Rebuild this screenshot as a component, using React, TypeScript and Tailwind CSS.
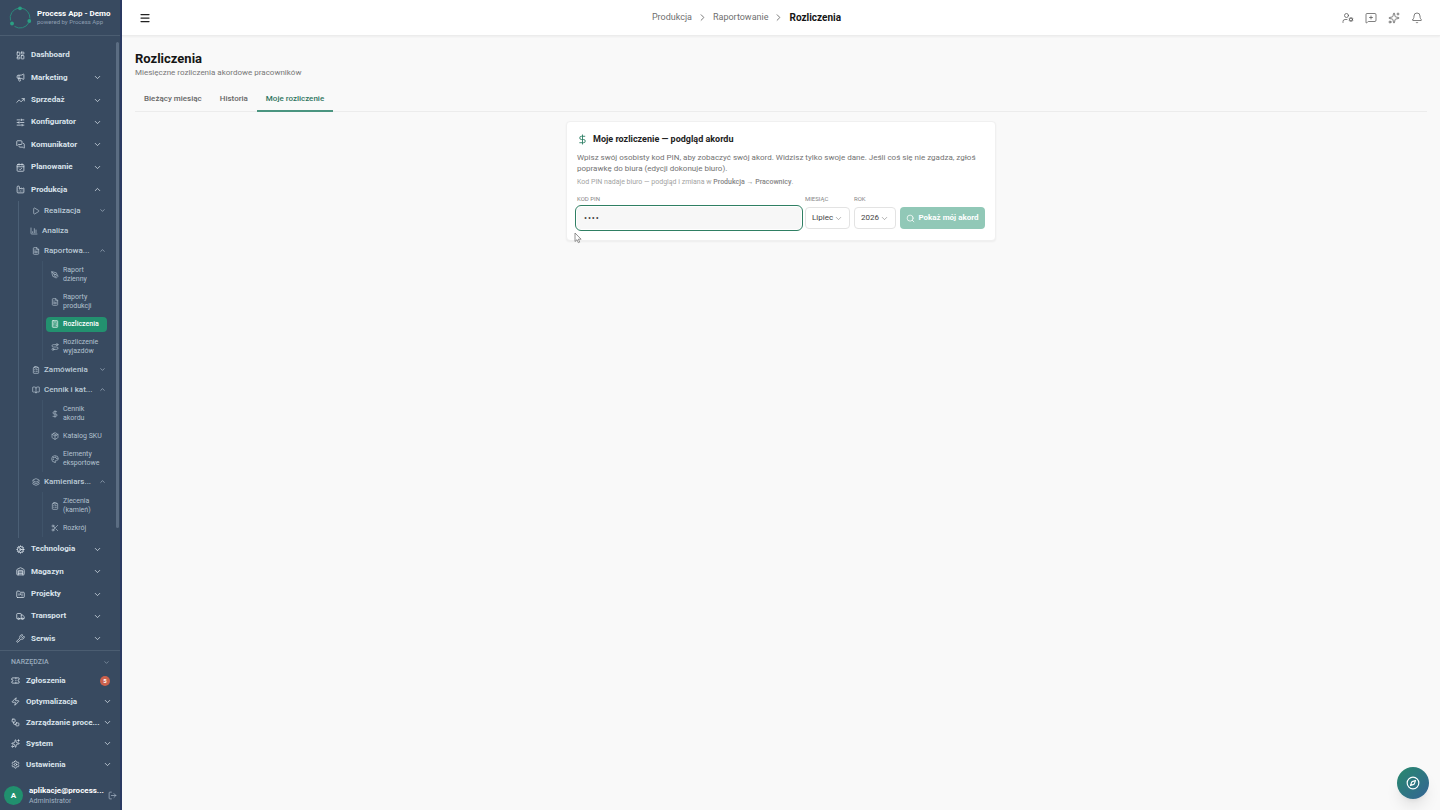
import React, { useState } from "react";
import {
  Bell,
  BookOpen,
  Calculator,
  CalendarCheck,
  ChartColumn,
  ChevronDown,
  ChevronRight,
  ChevronUp,
  ClipboardList,
  Cog,
  Compass,
  DollarSign,
  Factory,
  FileText,
  FolderKanban,
  Layers,
  LayoutDashboard,
  LogOut,
  Megaphone,
  Menu,
  MessageSquarePlus,
  MessagesSquare,
  Package,
  Palette,
  PenTool,
  Play,
  Route,
  Scissors,
  Search,
  Settings,
  SlidersHorizontal,
  Sparkles,
  Ticket,
  TrendingUp,
  Truck,
  UserCog,
  Warehouse,
  Workflow,
  Wrench,
  Zap,
  type LucideIcon,
} from "lucide-react";
import { clsx } from "clsx";

interface Leaf {
  label: string;
  icon: LucideIcon;
  active?: boolean;
}

interface Group {
  label: string;
  icon: LucideIcon;
  plain?: boolean;
  children?: Leaf[];
}

interface Section {
  label: string;
  icon: LucideIcon;
  plain?: boolean;
  badge?: number;
  children?: Group[];
}

const sections: Section[] = [
  { label: "Dashboard", icon: LayoutDashboard, plain: true },
  { label: "Marketing", icon: Megaphone },
  { label: "Sprzedaż", icon: TrendingUp },
  { label: "Konfigurator", icon: SlidersHorizontal },
  { label: "Komunikator", icon: MessagesSquare },
  { label: "Planowanie", icon: CalendarCheck },
  {
    label: "Produkcja",
    icon: Factory,
    children: [
      { label: "Realizacja", icon: Play },
      { label: "Analiza", icon: ChartColumn, plain: true },
      {
        label: "Raportowa...",
        icon: FileText,
        children: [
          { label: "Raport dzienny", icon: PenTool },
          { label: "Raporty produkcji", icon: FileText },
          { label: "Rozliczenia", icon: Calculator, active: true },
          { label: "Rozliczenie wyjazdów", icon: Route },
        ],
      },
      { label: "Zamówienia", icon: ClipboardList },
      {
        label: "Cennik i kat...",
        icon: BookOpen,
        children: [
          { label: "Cennik akordu", icon: DollarSign },
          { label: "Katalog SKU", icon: Package },
          { label: "Elementy eksportowe", icon: Palette },
        ],
      },
      {
        label: "Kamieniars...",
        icon: Layers,
        children: [
          { label: "Zlecenia (kamień)", icon: ClipboardList },
          { label: "Rozkrój", icon: Scissors },
        ],
      },
    ],
  },
  { label: "Technologia", icon: Cog },
  { label: "Magazyn", icon: Warehouse },
  { label: "Projekty", icon: FolderKanban },
  { label: "Transport", icon: Truck },
  { label: "Serwis", icon: Wrench },
];

const tools: Section[] = [
  { label: "Zgłoszenia", icon: Ticket, plain: true, badge: 5 },
  { label: "Optymalizacja", icon: Zap },
  { label: "Zarządzanie proce...", icon: Workflow },
  { label: "System", icon: Sparkles },
  { label: "Ustawienia", icon: Settings },
];

const tabs = ["Bieżący miesiąc", "Historia", "Moje rozliczenie"];

function Logo() {
  return (
    <svg className="h-6 w-6 shrink-0" viewBox="0 0 24 24" fill="none">
      <g stroke="#2b8a7c" strokeWidth="1">
        <path d="M13.5 2.1A10 10 0 0 1 21.9 12.5" />
        <path d="M20.8 16.7A10 10 0 0 1 6.5 20.4" />
        <path d="M2.5 14.5A10 10 0 0 1 10.2 2.2" />
      </g>
      <g fill="#2aa083">
        <circle cx="12" cy="2.3" r="1.9" />
        <circle cx="21.3" cy="15" r="1.9" />
        <circle cx="4" cy="17.5" r="1.9" />
      </g>
    </svg>
  );
}

function LeafLink({ item }: { item: Leaf }) {
  const Icon = item.icon;
  return (
    <a
      href="#"
      className={clsx(
        "flex items-center gap-1 rounded px-[5px] py-[3px] text-[7px] leading-[9px]",
        item.active ? "bg-[#23916f] font-medium text-white" : "text-[#b3c1cf]"
      )}
    >
      <Icon className="h-2 w-2 shrink-0" />
      <span className="w-[42px]">{item.label}</span>
    </a>
  );
}

function GroupItem({ group }: { group: Group }) {
  const Icon = group.icon;
  const Chevron = group.children ? ChevronUp : ChevronDown;
  return (
    <div>
      <button
        className={clsx(
          "flex h-5 w-full items-center gap-1 pr-[10px] text-left text-[8px] font-medium text-[#bccad7]",
          group.plain ? "pl-[11px]" : "pl-[13px]"
        )}
      >
        <Icon className="h-2 w-2 shrink-0" />
        <span className="flex-1 whitespace-nowrap">{group.label}</span>
        {!group.plain && <Chevron className="h-[7px] w-[7px] shrink-0" />}
      </button>
      {group.children && (
        <div className="mr-[9px] ml-[23px] flex flex-col gap-[3px] border-l border-[#3f5369] pt-[2px] pb-px pl-[3px]">
          {group.children.map((leaf) => (
            <LeafLink key={leaf.label} item={leaf} />
          ))}
        </div>
      )}
    </div>
  );
}

function Sidebar() {
  return (
    <aside className="flex w-[122px] shrink-0 flex-col border-r-2 border-[#2b3a63] bg-[#384a60]">
      <div className="flex h-9 shrink-0 items-center gap-[5px] border-b border-[#4b5d71] pl-2">
        <Logo />
        <div className="whitespace-nowrap">
          <div className="text-[8px] leading-[9px] font-bold text-white">Process App - Demo</div>
          <div className="text-[6px] leading-[8px] text-[#8d9eb0]">powered by Process App</div>
        </div>
      </div>

      <div className="flex min-h-0 flex-1">
        <nav className="flex min-w-0 flex-1 flex-col pt-2">
          {sections.map((section) => {
            const Icon = section.icon;
            const Chevron = section.children ? ChevronUp : ChevronDown;
            return (
              <React.Fragment key={section.label}>
                <button className="flex min-h-[22px] grow items-center gap-[6px] pr-[14px] pl-4 text-left text-[8px] font-bold text-[#dbe4ec]">
                  <Icon className="h-[9px] w-[9px] shrink-0" />
                  <span className="flex-1">{section.label}</span>
                  {!section.plain && <Chevron className="h-[9px] w-[9px] shrink-0" />}
                </button>
                {section.children && (
                  <div className="ml-[18px] shrink-0 border-l border-[#4b5f75] pb-px">
                    {section.children.map((group) => (
                      <GroupItem key={group.label} group={group} />
                    ))}
                  </div>
                )}
              </React.Fragment>
            );
          })}
        </nav>
        {/* scroll track */}
        <div className="flex w-1 flex-col pt-[6px] pr-px">
          <div className="h-4/5 rounded-full bg-[#5b6d82]" />
        </div>
      </div>

      <div className="shrink-0 border-t border-[#4b5d71]">
        <button className="mt-[3px] flex h-4 w-full items-center justify-between pr-[10px] pl-[11px] text-[7px] font-medium text-[#9aabbc]">
          NARZĘDZIA
          <ChevronDown className="h-[7px] w-[7px]" />
        </button>
        {tools.map((tool) => {
          const Icon = tool.icon;
          return (
            <button
              key={tool.label}
              className="flex h-[21px] w-full items-center gap-[6px] pr-2 pl-[11px] text-left text-[8px] font-bold text-[#dbe4ec]"
            >
              <Icon className="h-[9px] w-[9px] shrink-0" />
              <span className="min-w-0 flex-1 whitespace-nowrap">{tool.label}</span>
              {tool.badge ? (
                <span className="mr-[2px] flex h-[10px] w-[10px] items-center justify-center rounded-full bg-[#cb614c] text-[6px] text-white">
                  {tool.badge}
                </span>
              ) : (
                <ChevronDown className="h-[9px] w-[9px] shrink-0" />
              )}
            </button>
          );
        })}
        <div className="flex h-[35px] items-center gap-[6px] pt-[6px] pr-[3px] pl-1">
          <div className="flex h-[19px] w-[19px] shrink-0 items-center justify-center rounded-full bg-[#21906e] text-[8px] font-bold text-white">
            A
          </div>
          <div className="min-w-0 flex-1 whitespace-nowrap">
            <div className="text-[8px] leading-[10px] font-bold text-white">aplikacje@process...</div>
            <div className="text-[7px] leading-[10px] text-[#a3b2c1]">Administrator</div>
          </div>
          <button aria-label="Wyloguj" className="shrink-0 text-[#a3b2c1]">
            <LogOut className="h-[9px] w-[9px]" />
          </button>
        </div>
      </div>
    </aside>
  );
}

function Header() {
  return (
    <header className="flex h-9 shrink-0 items-center justify-between border-b border-[#ececec] bg-white px-[17px] shadow-xs">
      <button aria-label="Menu" className="text-[#222]">
        <Menu className="h-3 w-3" strokeWidth={2.5} />
      </button>
      <nav aria-label="Ścieżka" className="flex items-center gap-[5px] text-[9px] text-[#6f6f6f]">
        <a href="#">Produkcja</a>
        <ChevronRight className="h-[11px] w-[11px]" />
        <a href="#">Raportowanie</a>
        <ChevronRight className="h-[11px] w-[11px]" />
        <span className="text-[10px] font-bold text-[#151515]">Rozliczenia</span>
      </nav>
      <div className="flex items-center gap-[11px] text-[#555]">
        <button aria-label="Użytkownicy">
          <UserCog className="h-3 w-3" strokeWidth={1.5} />
        </button>
        <button aria-label="Nowa wiadomość">
          <MessageSquarePlus className="h-3 w-3" strokeWidth={1.5} />
        </button>
        <button aria-label="Asystent">
          <Sparkles className="h-3 w-3" strokeWidth={1.5} />
        </button>
        <button aria-label="Powiadomienia">
          <Bell className="h-3 w-3" strokeWidth={1.5} />
        </button>
      </div>
    </header>
  );
}

function SelectBox({ id, label, options, className }: { id: string; label: string; options: string[]; className: string }) {
  return (
    <div className={clsx("flex flex-col gap-1", className)}>
      <label htmlFor={id} className="text-[6px] leading-[8px] text-[#858585]">
        {label}
      </label>
      <div className="relative">
        <select
          id={id}
          className="block h-[22px] w-full appearance-none rounded border border-[#e3e3e3] bg-white pl-[6px] text-[8px] text-[#444] outline-none"
        >
          {options.map((o) => (
            <option key={o}>{o}</option>
          ))}
        </select>
        <ChevronDown className="pointer-events-none absolute top-[7px] right-[7px] h-[9px] w-[9px] text-[#777]" strokeWidth={1.5} />
      </div>
    </div>
  );
}

function PinCard() {
  const [pin, setPin] = useState("");

  return (
    <section className="relative mx-auto mt-[9px] w-full max-w-[430px] rounded border border-[#f0f0f0] bg-white px-[10px] pt-[11px] pb-[11px] shadow-xs">
      <h2 className="flex items-center gap-[5px] text-[9px] leading-[12px] font-bold text-[#222]">
        <DollarSign className="h-[11px] w-[11px] text-[#2f8066]" />
        Moje rozliczenie — podgląd akordu
      </h2>
      <p className="mt-[7px] text-[8px] leading-[11px] text-[#737373]">
        Wpisz swój osobisty kod PIN, aby zobaczyć swój akord. Widzisz tylko swoje dane. Jeśli coś się nie zgadza, zgłoś
        poprawkę do biura (edycji dokonuje biuro).
      </p>
      <p className="mt-[3px] text-[7px] leading-[10px] text-[#a3a3a3]">
        Kod PIN nadaje biuro — podgląd i zmiana w{" "}
        <span className="font-medium text-[#858585]">Produkcja → Pracownicy</span>.
      </p>
      <form className="mt-2 flex items-end gap-1" onSubmit={(e) => e.preventDefault()}>
        <div className="flex flex-1 flex-col gap-1">
          <label htmlFor="pin" className="text-[6px] leading-[8px] text-[#858585]">
            KOD PIN
          </label>
          <input
            id="pin"
            value={pin}
            onChange={(e) => setPin(e.target.value)}
            placeholder="••••"
            className="h-[22px] w-full rounded bg-[#f7f7f7] px-[7px] text-[9px] tracking-widest text-[#333] outline-1 outline-offset-1 outline-[#2f7f63] placeholder:text-[#444]"
          />
        </div>
        <SelectBox id="month" label="MIESIĄC" options={["Lipiec", "Sierpień"]} className="w-[45px]" />
        <SelectBox id="year" label="ROK" options={["2026", "2025"]} className="w-[42px]" />
        <button className="flex h-[22px] w-[85px] items-center justify-center gap-[3px] rounded bg-[#91c8b7] text-[8px] font-bold whitespace-nowrap text-white">
          <Search className="h-[9px] w-[9px]" />
          Pokaż mój akord
        </button>
      </form>

      {/* mouse pointer */}
      <svg className="absolute -bottom-1 left-[7px] h-3 w-2" viewBox="0 0 8 12" fill="#fff" stroke="#777" strokeWidth="0.8">
        <path d="M1 1v8.5l2-1.8 1.3 3 1.4-.6-1.3-2.9h2.7z" />
      </svg>
    </section>
  );
}

export default function App() {
  const [tab, setTab] = useState("Moje rozliczenie");

  return (
    <div className="flex h-screen bg-[#f9f9f9] font-['Roboto',sans-serif]">
      <Sidebar />
      <div className="flex min-w-0 flex-1 flex-col">
        <Header />
        <main className="flex-1 px-[13px] pt-[14px]">
          <h1 className="text-[13px] leading-[17px] font-bold text-[#151515]">Rozliczenia</h1>
          <p className="text-[8px] leading-[11px] text-[#777]">Miesięczne rozliczenia akordowe pracowników</p>
          <div role="tablist" className="mt-2 flex border-b border-[#ececec]">
            {tabs.map((t) => (
              <button
                key={t}
                role="tab"
                aria-selected={t === tab}
                onClick={() => setTab(t)}
                className={clsx(
                  "-mb-px h-[26px] border-b-2 px-[9px] pt-[2px] text-[8px] font-medium",
                  t === tab ? "border-[#4b9580] text-[#2f7560]" : "border-transparent text-[#666]"
                )}
              >
                {t}
              </button>
            ))}
          </div>
          <PinCard />
        </main>
      </div>

      <button
        aria-label="Przewodnik"
        className="fixed right-[11px] bottom-[11px] flex h-8 w-8 items-center justify-center rounded-full bg-linear-to-br from-[#27896b] to-[#356394] text-white shadow-lg"
      >
        <Compass className="h-[14px] w-[14px]" />
      </button>
    </div>
  );
}
